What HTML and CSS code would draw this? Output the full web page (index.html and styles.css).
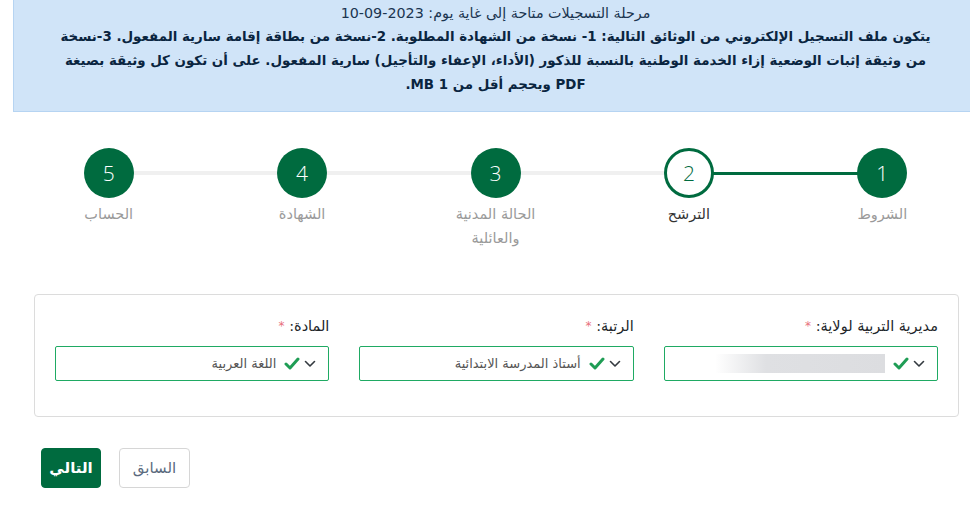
FILE: index.html
```html
<!DOCTYPE html>
<html lang="ar">
<head>
    <meta charset="UTF-8">
    <meta name="viewport" content="width=device-width, initial-scale=1.0">
    <title>التسجيل</title>
    <link rel="stylesheet" href="styles.css">
</head>
<body>
    <div class="page" dir="rtl">
        <!-- Notice -->
        <div class="alert">
            <div class="alert-date">مرحلة التسجيلات متاحة إلى غاية يوم: 2023-09-10</div>
            <div class="alert-text">
                يتكون ملف التسجيل الإلكتروني من الوثائق التالية: 1- نسخة من الشهادة المطلوبة. 2-نسخة من بطاقة إقامة سارية المفعول. 3-نسخة<br>
                من وثيقة إثبات الوضعية إزاء الخدمة الوطنية بالنسبة للذكور (الأداء، الإعفاء والتأجيل) سارية المفعول. على أن تكون كل وثيقة بصيغة<br>
                PDF وبحجم أقل من 1 MB.
            </div>
        </div>

        <!-- Steps -->
        <div class="steps">
            <div class="step done">
                <div class="circle">1</div>
                <div class="step-label">الشروط</div>
            </div>
            <div class="step current">
                <div class="circle">2</div>
                <div class="step-label">الترشح</div>
            </div>
            <div class="step">
                <div class="circle">3</div>
                <div class="step-label">الحالة المدنية والعائلية</div>
            </div>
            <div class="step">
                <div class="circle">4</div>
                <div class="step-label">الشهادة</div>
            </div>
            <div class="step">
                <div class="circle">5</div>
                <div class="step-label">الحساب</div>
            </div>
        </div>

        <!-- Form -->
        <div class="card">
            <div class="field">
                <label>مديرية التربية لولاية: <span class="req">*</span></label>
                <div class="select">
                    <svg class="chevron" width="12" height="8" viewBox="0 0 12 8"><polyline points="1.5,1.5 6,6 10.5,1.5" fill="none" stroke="#343a40" stroke-width="1.6" stroke-linecap="round" stroke-linejoin="round"/></svg>
                    <svg class="check" width="16" height="13" viewBox="0 0 16 13"><polyline points="2,7 6,11 14,2" fill="none" stroke="#1f9d55" stroke-width="3" stroke-linecap="round" stroke-linejoin="round"/></svg>
                    <span class="blur"></span>
                </div>
            </div>
            <div class="field">
                <label>الرتبة: <span class="req">*</span></label>
                <div class="select">
                    <svg class="chevron" width="12" height="8" viewBox="0 0 12 8"><polyline points="1.5,1.5 6,6 10.5,1.5" fill="none" stroke="#343a40" stroke-width="1.6" stroke-linecap="round" stroke-linejoin="round"/></svg>
                    <svg class="check" width="16" height="13" viewBox="0 0 16 13"><polyline points="2,7 6,11 14,2" fill="none" stroke="#1f9d55" stroke-width="3" stroke-linecap="round" stroke-linejoin="round"/></svg>
                    <span class="value">أستاذ المدرسة الابتدائية</span>
                </div>
            </div>
            <div class="field">
                <label>المادة: <span class="req">*</span></label>
                <div class="select">
                    <svg class="chevron" width="12" height="8" viewBox="0 0 12 8"><polyline points="1.5,1.5 6,6 10.5,1.5" fill="none" stroke="#343a40" stroke-width="1.6" stroke-linecap="round" stroke-linejoin="round"/></svg>
                    <svg class="check" width="16" height="13" viewBox="0 0 16 13"><polyline points="2,7 6,11 14,2" fill="none" stroke="#1f9d55" stroke-width="3" stroke-linecap="round" stroke-linejoin="round"/></svg>
                    <span class="value">اللغة العربية</span>
                </div>
            </div>
        </div>

        <!-- Buttons -->
        <div class="actions">
            <button class="btn btn-prev">السابق</button>
            <button class="btn btn-next">التالي</button>
        </div>
    </div>
</body>
</html>
```

FILE: styles.css
```css
html, body {
    overflow: hidden;
}

body {
    margin: 0;
    background: #fff;
    font-family: "DejaVu Sans", "Noto Sans", sans-serif;
    color: #212529;
}

.page {
    width: 967px;
    margin-left: 12px;
}

/* Notice box */
.alert {
    margin: 0 1px;
    padding: 1px 6px 14px;
    background: #d0e4f8;
    border: 1px solid #b6d4f2;
    border-top: none;
    text-align: center;
    color: #0c2d52;
}

.alert-date {
    font-size: 14.3px;
    line-height: 24px;
    color: #1b3550;
}

.alert-text {
    font-size: 13.4px;
    font-weight: bold;
    line-height: 24px;
    color: #0a2540;
}

/* Steps */
.steps {
    display: grid;
    grid-template-columns: repeat(5, 1fr);
    margin-top: 36px;
}

.step {
    position: relative;
    display: flex;
    flex-direction: column;
    align-items: center;
}

/* connector line to the next step */
.step::after {
    content: "";
    position: absolute;
    top: 23px;
    left: -50%;
    right: 50%;
    height: 4px;
    background: #f0f0f0;
}

.step:last-child::after {
    display: none;
}

.step.done::after {
    top: 24px;
    height: 3px;
    background: #006b3f;
}

.circle {
    position: relative;
    z-index: 1;
    width: 50px;
    height: 50px;
    border-radius: 50%;
    background: #006b3f;
    color: #fff;
    font-family: "Open Sans", sans-serif;
    font-size: 21px;
    font-weight: 300;
    display: flex;
    align-items: center;
    justify-content: center;
    box-sizing: border-box;
}

.step.current .circle {
    background: #fff;
    border: 3px solid #006b3f;
    color: #006b3f;
}

.step-label {
    margin-top: 4px;
    max-width: 110px;
    text-align: center;
    font-size: 14.5px;
    line-height: 24px;
    color: #9a9a9a;
}

.step.current .step-label {
    color: #333;
}

/* Form card */
.card {
    margin: 44px 20px 0 22px;
    padding: 20px 20px 35px;
    border: 1px solid #dcdcdc;
    border-radius: 4px;
    display: grid;
    grid-template-columns: repeat(3, 1fr);
    column-gap: 30px;
}

.field label {
    display: block;
    font-size: 14.5px;
    line-height: 22px;
    margin-bottom: 9px;
    color: #212529;
}

.req {
    color: #e8707c;
    font-size: 12px;
    vertical-align: top;
}

.select {
    height: 33px;
    border: 1px solid #1faa63;
    border-radius: 2px;
    display: flex;
    align-items: center;
    gap: 4px;
    padding-right: 12px;
    font-size: 13px;
    color: #555;
}

.select .check {
    margin-left: 4px;
}

.value {
    white-space: nowrap;
}

.blur {
    width: 170px;
    height: 19px;
    background: linear-gradient(to left, #dcdde0 0%, #dfe0e3 70%, #fff 100%);
}

/* Buttons */
.actions {
    display: flex;
    justify-content: flex-end;
    gap: 18px;
    margin: 31px 0 0 29px;
}

.btn {
    height: 40px;
    padding: 0 12px;
    border-radius: 4px;
    font-family: "DejaVu Sans", sans-serif;
    font-size: 15px;
    cursor: pointer;
}

.btn-prev {
    width: 71px;
    background: #fff;
    border: 1px solid #d6d6d6;
    color: #5a6a7e;
}

.btn-next {
    width: 60px;
    padding: 0;
    background: #006b3f;
    border: 1px solid #006b3f;
    color: #fff;
    font-weight: bold;
}
```
